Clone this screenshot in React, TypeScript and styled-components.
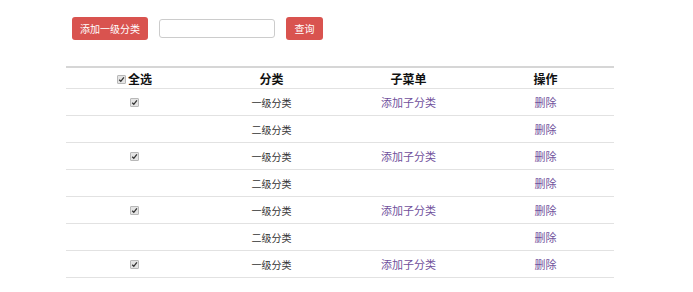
import React from 'react';
import styled, { createGlobalStyle } from 'styled-components';

const GlobalStyle = createGlobalStyle`
  body {
    margin: 0;
    background: #fff;
    font-family: "Liberation Sans", "Noto Sans CJK SC", sans-serif;
    color: #333;
  }
`;

const rows = [
  { level: '一级分类', top: true },
  { level: '二级分类', top: false },
  { level: '一级分类', top: true },
  { level: '二级分类', top: false },
  { level: '一级分类', top: true },
  { level: '二级分类', top: false },
  { level: '一级分类', top: true },
];

const Page = styled.div`
  padding: 17px 0 0 66px;
  width: 548px;
`;

const Toolbar = styled.div`
  display: flex;
  align-items: center;
  gap: 11px;
  padding-left: 6px;
`;

const RedButton = styled.button<{ $w: number }>`
  width: ${(p) => p.$w}px;
  height: 23px;
  padding: 0;
  border: none;
  border-radius: 3px;
  background: #d9534f;
  color: #fff;
  font-family: "Noto Sans CJK SC", sans-serif;
  font-size: 10px;
  line-height: 23px;
  text-align: center;
`;

const SearchInput = styled.input`
  width: 116px;
  height: 19px;
  box-sizing: border-box;
  border: 1px solid #ccc;
  border-radius: 3px;
  padding: 0 4px;
`;

const Table = styled.table`
  margin-top: 26px;
  width: 548px;
  border-collapse: collapse;
  table-layout: fixed;
  border-top: 2px solid #d6d6d6;
`;

const HeadCell = styled.th`
  height: 20px;
  padding: 0;
  font-family: "Noto Sans CJK SC", sans-serif;
  font-size: 12px;
  font-weight: 700;
  color: #111;
  text-align: center;
  vertical-align: middle;
  border-bottom: 1px solid #e2e2e2;
`;

const Cell = styled.td`
  height: 26px;
  padding: 0;
  text-align: center;
  vertical-align: middle;
  font-family: "Noto Sans CJK SC", sans-serif;
  font-size: 10px;
  color: #333;
  border-bottom: 1px solid #e2e2e2;
`;

const Link = styled.a`
  font-size: 11px;
  color: #70509c;
  text-decoration: none;
`;

const Box = styled.span<{ $gap: number }>`
  display: inline-block;
  width: 7px;
  height: 7px;
  border: 1px solid #b8b8b8;
  border-radius: 1px;
  background: #e4e4e4;
  vertical-align: middle;
  margin-right: ${(p) => p.$gap}px;
  position: relative;
  top: -1px;
  svg {
    display: block;
  }
`;

const Check = ({ gap = 0 }: { gap?: number }) => (
  <Box $gap={gap}>
    <svg width="7" height="7" viewBox="0 0 7 7">
      <path d="M1.2 3.8 L2.8 5.3 L5.9 1.4" fill="none" stroke="#333" strokeWidth="1.3" />
    </svg>
  </Box>
);

const App = () => (
  <Page>
    <GlobalStyle />
    <Toolbar>
      <RedButton $w={76}>添加一级分类</RedButton>
      <SearchInput type="text" />
      <RedButton $w={37}>查询</RedButton>
    </Toolbar>
    <Table>
      <thead>
        <tr>
          <HeadCell>
            <Check gap={2} />
            全选
          </HeadCell>
          <HeadCell>分类</HeadCell>
          <HeadCell>子菜单</HeadCell>
          <HeadCell>操作</HeadCell>
        </tr>
      </thead>
      <tbody>
        {rows.map((row, i) => (
          <tr key={i}>
            <Cell>{row.top && <Check />}</Cell>
            <Cell>{row.level}</Cell>
            <Cell>{row.top && <Link href="#">添加子分类</Link>}</Cell>
            <Cell>
              <Link href="#">删除</Link>
            </Cell>
          </tr>
        ))}
      </tbody>
    </Table>
  </Page>
);

export default App;
